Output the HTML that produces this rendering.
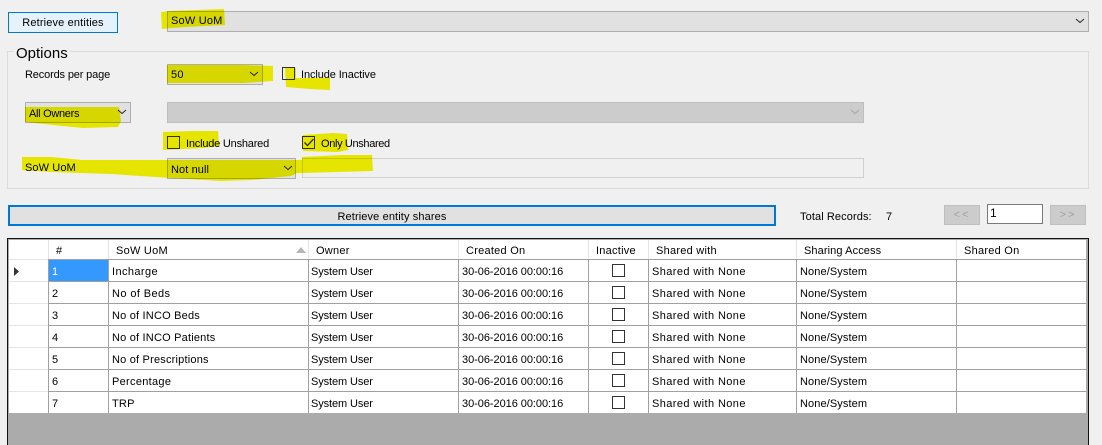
<!DOCTYPE html>
<html><head><meta charset="utf-8"><style>
html,body{margin:0;padding:0;width:1102px;height:445px;overflow:hidden;background:#f0f0f0}
body{position:relative;font:11px "Liberation Sans",sans-serif;letter-spacing:.2px;color:#000}
.a{position:absolute;box-sizing:border-box;white-space:nowrap}
.t{position:absolute;white-space:nowrap;line-height:14px}
.c{position:absolute;box-sizing:border-box;background:#e1e1e1;border:1px solid #adadad}
.d{background:#ccc;border-color:#bfbfbf}
.k{position:absolute;box-sizing:border-box;width:13px;height:13px;border:1px solid #333}
.h{position:absolute;top:241px;height:19px;line-height:20px;white-space:nowrap;letter-spacing:.25px}
.vl{position:absolute;top:240px;width:1px;height:173px;background:#a0a0a0}
.hl{position:absolute;left:48px;width:1038px;height:1px;background:#a0a0a0}
.rl{position:absolute;left:9px;width:39px;height:1px;background:#e4e4e4}
.vh{position:absolute;top:240px;width:1px;height:19px;background:#e4e4e4}
.u{letter-spacing:-.1px}.o{letter-spacing:-.05px}.s{letter-spacing:.4px}.n{letter-spacing:.1px}.m{letter-spacing:.3px}
svg{position:absolute;left:0;top:0}
.ch{fill:none;stroke-width:1.1}
</style></head><body>
<div class="a" style="left:8px;top:12px;width:110px;height:21px;background:#e5f1fb;border:1px solid #0078d7;text-align:center;line-height:20px;letter-spacing:.15px">Retrieve entities</div>
<div class="c" style="left:167px;top:11px;width:922px;height:21px"></div>
<div class="t" style="left:171px;top:14px">SoW UoM</div>

<div class="a" style="left:7px;top:51px;width:1082px;height:138px;border:1px solid #dcdcdc"></div>
<div class="t" style="left:14px;top:45px;font-size:15px;letter-spacing:0;line-height:17px;background:#f0f0f0;padding:0 2px">Options</div>
<div class="t" style="left:25px;top:68px;letter-spacing:-.15px">Records per page</div>
<div class="c" style="left:167px;top:64px;width:96px;height:21px"></div>
<div class="t" style="left:171px;top:68px">50</div>
<div class="k" style="left:282px;top:67px"></div>
<div class="t" style="left:301px;top:68px;letter-spacing:-.1px">Include Inactive</div>

<div class="c" style="left:25px;top:102px;width:106px;height:21px"></div>
<div class="t" style="left:29px;top:107px;letter-spacing:-.3px">All Owners</div>
<div class="c d" style="left:167px;top:102px;width:697px;height:21px"></div>

<div class="k" style="left:167px;top:136px"></div>
<div class="t" style="left:186px;top:137px;letter-spacing:-.2px">Include Unshared</div>
<div class="k" style="left:302px;top:136px"></div>
<div class="t" style="left:321px;top:137px;letter-spacing:-.35px">Only Unshared</div>

<div class="t" style="left:25px;top:161px;letter-spacing:.1px">SoW UoM</div>
<div class="c" style="left:167px;top:158px;width:129px;height:21px"></div>
<div class="t" style="left:171px;top:163px;letter-spacing:.1px">Not null</div>
<div class="a" style="left:302px;top:158px;width:562px;height:20px;border:1px solid #d0d0d0;background:#f0f0f0"></div>

<div class="a" style="left:8px;top:205px;width:768px;height:21px;background:#e1e1e1;border:2px solid #0078d7;text-align:center;line-height:20px;letter-spacing:.12px">Retrieve entity shares</div>
<div class="t" style="left:800px;top:210px;letter-spacing:.1px">Total Records:</div>
<div class="t" style="left:886px;top:210px">7</div>
<div class="a" style="left:944px;top:205px;width:36px;height:20px;background:#ccc;border:1px solid #bfbfbf;text-align:center;line-height:18px;color:#a0a0a0;letter-spacing:2px">&lt;&lt;</div>
<div class="a" style="left:987px;top:204px;width:56px;height:20px;background:#fff;border:1px solid #7a7a7a;padding-left:2px;line-height:16px;font-size:12px">1</div>
<div class="a" style="left:1050px;top:205px;width:36px;height:20px;background:#ccc;border:1px solid #bfbfbf;text-align:center;line-height:18px;color:#a0a0a0;letter-spacing:2px">&gt;&gt;</div>

<!-- grid -->
<div class="a" style="left:7px;top:238px;width:1082px;height:207px;background:#ababab;border:1px solid #111;border-bottom:0"></div>
<div class="a" style="left:9px;top:240px;width:1077px;height:173px;background:#fff"></div>
<div class="a" style="left:49px;top:260px;width:59px;height:21px;background:#3399ff"></div>

<div class="hl" style="top:259px"></div><div class="hl" style="top:281px"></div><div class="hl" style="top:303px"></div><div class="hl" style="top:325px"></div><div class="hl" style="top:347px"></div><div class="hl" style="top:369px"></div><div class="hl" style="top:391px"></div>
<div class="rl" style="top:259px"></div><div class="rl" style="top:281px"></div><div class="rl" style="top:303px"></div><div class="rl" style="top:325px"></div><div class="rl" style="top:347px"></div><div class="rl" style="top:369px"></div><div class="rl" style="top:391px"></div>
<div class="vl" style="left:48px"></div><div class="vl" style="left:108px"></div><div class="vl" style="left:308px"></div><div class="vl" style="left:458px"></div><div class="vl" style="left:588px"></div><div class="vl" style="left:648px"></div><div class="vl" style="left:796px"></div><div class="vl" style="left:956px"></div>
<div class="vh" style="left:48px"></div><div class="vh" style="left:108px"></div><div class="vh" style="left:308px"></div><div class="vh" style="left:458px"></div><div class="vh" style="left:588px"></div><div class="vh" style="left:648px"></div><div class="vh" style="left:796px"></div><div class="vh" style="left:956px"></div>

<div class="h" style="left:56px">#</div>
<div class="h" style="left:116px">SoW UoM</div>
<div class="h" style="left:316px">Owner</div>
<div class="h" style="left:466px">Created On</div>
<div class="h" style="left:596px">Inactive</div>
<div class="h" style="left:656px">Shared with</div>
<div class="h n" style="left:804px">Sharing Access</div>
<div class="h" style="left:964px">Shared On</div>

<div class="t" style="left:52px;top:265px;color:#fff">1</div><div class="t s" style="left:112px;top:265px">Incharge</div><div class="t u" style="left:311px;top:265px">System User</div><div class="t o" style="left:462px;top:265px">30-06-2016 00:00:16</div><div class="k" style="left:612px;top:264px"></div><div class="t s" style="left:652px;top:265px">Shared with None</div><div class="t n" style="left:800px;top:265px">None/System</div>
<div class="t" style="left:52px;top:287px">2</div><div class="t s" style="left:112px;top:287px">No of Beds</div><div class="t u" style="left:311px;top:287px">System User</div><div class="t o" style="left:462px;top:287px">30-06-2016 00:00:16</div><div class="k" style="left:612px;top:286px"></div><div class="t s" style="left:652px;top:287px">Shared with None</div><div class="t n" style="left:800px;top:287px">None/System</div>
<div class="t" style="left:52px;top:309px">3</div><div class="t" style="left:112px;top:309px">No of INCO Beds</div><div class="t u" style="left:311px;top:309px">System User</div><div class="t o" style="left:462px;top:309px">30-06-2016 00:00:16</div><div class="k" style="left:612px;top:308px"></div><div class="t s" style="left:652px;top:309px">Shared with None</div><div class="t n" style="left:800px;top:309px">None/System</div>
<div class="t" style="left:52px;top:331px">4</div><div class="t" style="left:112px;top:331px">No of INCO Patients</div><div class="t u" style="left:311px;top:331px">System User</div><div class="t o" style="left:462px;top:331px">30-06-2016 00:00:16</div><div class="k" style="left:612px;top:330px"></div><div class="t s" style="left:652px;top:331px">Shared with None</div><div class="t n" style="left:800px;top:331px">None/System</div>
<div class="t" style="left:52px;top:353px">5</div><div class="t" style="left:112px;top:353px">No of Prescriptions</div><div class="t u" style="left:311px;top:353px">System User</div><div class="t o" style="left:462px;top:353px">30-06-2016 00:00:16</div><div class="k" style="left:612px;top:352px"></div><div class="t s" style="left:652px;top:353px">Shared with None</div><div class="t n" style="left:800px;top:353px">None/System</div>
<div class="t" style="left:52px;top:375px">6</div><div class="t m" style="left:112px;top:375px">Percentage</div><div class="t u" style="left:311px;top:375px">System User</div><div class="t o" style="left:462px;top:375px">30-06-2016 00:00:16</div><div class="k" style="left:612px;top:374px"></div><div class="t s" style="left:652px;top:375px">Shared with None</div><div class="t n" style="left:800px;top:375px">None/System</div>
<div class="t" style="left:52px;top:397px">7</div><div class="t" style="left:112px;top:397px">TRP</div><div class="t u" style="left:311px;top:397px">System User</div><div class="t o" style="left:462px;top:397px">30-06-2016 00:00:16</div><div class="k" style="left:612px;top:396px"></div><div class="t s" style="left:652px;top:397px">Shared with None</div><div class="t n" style="left:800px;top:397px">None/System</div>

<svg width="1102" height="445" viewBox="0 0 1102 445">
<path d="M14 267l5 4.500l-5 4.500z" fill="#333"/>
<path d="M296 253h10l-5-6z" fill="#b5b5b5"/>
<g stroke="#333"><path class="ch" d="M1076 19l4 3.500l4-3.500"/><path class="ch" d="M250 72l4 3.500l4-3.500"/><path class="ch" d="M118 110l4 3.500l4-3.500"/><path class="ch" d="M284 166l4 3.500l4-3.500"/></g>
<path class="ch" stroke="#a8a8a8" d="M851 110l4 3.500l4-3.500"/>
<path fill="none" stroke="#333" stroke-width="1.300" d="M304.500 142.500l3 3l6-6.500"/>
<g style="mix-blend-mode:multiply" fill="#f4f400">
<path d="M161 12l10-1l53-2l1 16l-40 2l-14 1l-9 1z"/>
<path d="M167 65h75l31 1v15l-30 2h-76z"/>
<path d="M285 68h11v10l34 0v12l-20-1l-24-2z"/>
<path d="M25 107h94l2 14l-3 6l-35 1l-30-3l-28-3z"/>
<path d="M163 132l30-1l25 0l1 15l-15 2l-41 2z"/>
<path d="M303 135l30-2l14 1l1 16l-10 2l-35-1z"/>
<path d="M22 157l30 0l30 3l85 0v0l135 0v-3l40-2l30 0l1 16l-71 2h-5l-6 3l-40 4l-30 1l-50-3l-60-4l-30-1l-30-1l-29-2z"/>
</g>
</svg>
</body></html>
